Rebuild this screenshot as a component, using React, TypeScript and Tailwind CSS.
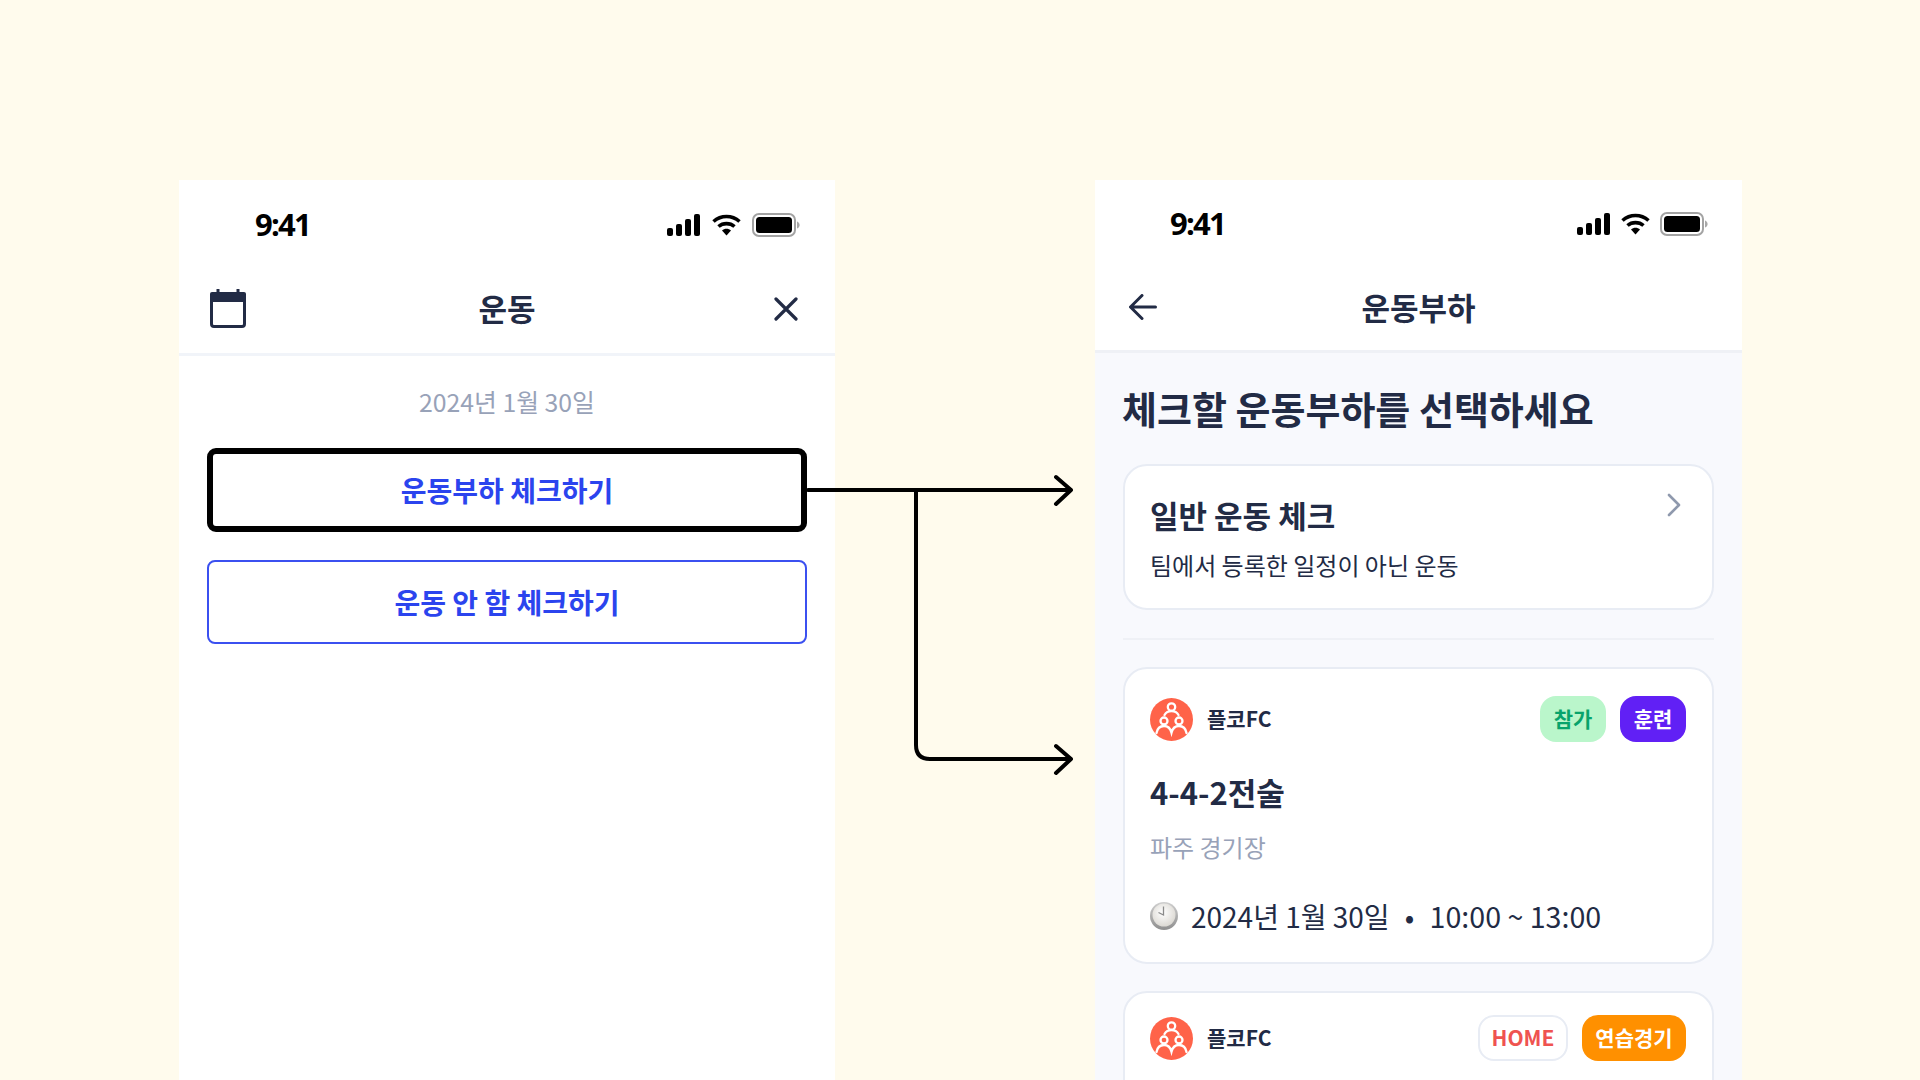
const font = "[font-family:'Noto_Sans_CJK_KR','Noto_Sans',sans-serif]";

function Signal() {
  return (
    <svg width="34" height="22" viewBox="0 0 34 22" fill="#000">
      <rect x="0" y="14" width="6" height="8" rx="2" />
      <rect x="9" y="10" width="6" height="12" rx="2" />
      <rect x="18" y="5" width="6" height="17" rx="2" />
      <rect x="27" y="0" width="6" height="22" rx="2" />
    </svg>
  );
}

function Wifi() {
  return (
    <svg width="29" height="22" viewBox="0 0 29 22" fill="none">
      <path d="M1.5 7.5C9 .8 20 .8 27.5 7.5" stroke="#000" strokeWidth="3.6" />
      <path d="M6.5 12.5C11 8.6 18 8.6 22.5 12.5" stroke="#000" strokeWidth="3.6" />
      <path d="M10 16.5C12.6 14 16.4 14 19 16.5L14.5 21.5Z" fill="#000" />
    </svg>
  );
}

function Battery() {
  return (
    <svg width="48" height="24" viewBox="0 0 48 24" fill="none">
      <rect x="1" y="1" width="42" height="22" rx="6" stroke="#a3a3a3" strokeWidth="2" />
      <rect x="4" y="4" width="36" height="16" rx="3.5" fill="#000" />
      <path d="M45 8.5c1.6.5 2.6 2 2.6 3.5s-1 3-2.6 3.5Z" fill="#a8a8a8" />
    </svg>
  );
}

function Status({ className, gap }: { className: string; gap: string }) {
  return (
    <div className={`flex shrink-0 items-center justify-between ${className}`}>
      <span className="-mt-[2px] font-['Open_Sans',sans-serif] text-[31px] leading-none font-bold tracking-[-1.8px] text-black">9:41</span>
      <div className={`flex items-center ${gap}`}>
        <Signal />
        <Wifi />
        <Battery />
      </div>
    </div>
  );
}

function Logo() {
  return (
    <svg width="43" height="43" viewBox="0 0 43 43" fill="none" className="shrink-0">
      <circle cx="21.5" cy="21.5" r="21.5" fill="#ff6349" />
      <g stroke="#fff" strokeWidth="2.3" strokeLinecap="round">
        <circle cx="21.5" cy="9" r="3.700" />
        <circle cx="14" cy="23" r="3.500" />
        <circle cx="29" cy="23" r="3.500" />
        <path d="M14.500 17c1.400-2.500 3.800-3.900 7-3.900s5.600 1.400 7 3.900" />
        <path d="M6.500 35c.8-4.400 3.500-7 7.500-7 3.800 0 6.400 2.400 7.500 6.600 1.100-4.200 3.700-6.600 7.500-6.600 4 0 6.700 2.600 7.500 7" />
      </g>
    </svg>
  );
}

function Clock() {
  return (
    <svg width="28" height="28" viewBox="0 0 28 28" className="shrink-0">
      <defs>
        <linearGradient id="rim" x1="0" y1="0" x2="0" y2="1">
          <stop offset="0" stopColor="#cfcfcf" />
          <stop offset="1" stopColor="#8f8f8f" />
        </linearGradient>
        <radialGradient id="face" cx="0.45" cy="0.4" r="0.65">
          <stop offset="0" stopColor="#ffffff" />
          <stop offset="1" stopColor="#d9d6d0" />
        </radialGradient>
      </defs>
      <circle cx="14" cy="14" r="14" fill="url(#rim)" />
      <circle cx="14" cy="13" r="11.500" fill="url(#face)" />
      <path d="M13.500 4.500V13L8.500 10.500" stroke="#8a8a8a" strokeWidth="1.300" fill="none" />
    </svg>
  );
}

function TeamRow({ children }: { children: React.ReactNode }) {
  return (
    <div className="flex items-center justify-between">
      <div className="flex items-center gap-[14px]">
        <Logo />
        <span className="text-[21px] font-bold text-[#222b45]">플코FC</span>
      </div>
      <div className="flex items-center gap-[14px]">{children}</div>
    </div>
  );
}

function Badge({ className, children }: { className: string; children: React.ReactNode }) {
  return (
    <span className={`flex h-[46px] items-center justify-center rounded-[16px] text-[21px] font-bold ${className}`}>
      {children}
    </span>
  );
}

export default function App() {
  return (
    <div className={`relative flex h-[1080px] w-[1920px] items-start gap-[260px] overflow-hidden bg-[#fffbed] pt-[180px] pl-[179px] ${font}`}>
      <div className="flex h-[900px] w-[656px] shrink-0 flex-col bg-white">
        <Status className="h-[90px] pr-[35px] pl-[76px]" gap="gap-[11px]" />
        <div className="flex h-[86px] shrink-0 items-center justify-between border-b-[3px] border-[#f1f4f9] pr-[37px] pb-[6px] pl-[31px]">
          <svg width="36" height="39" viewBox="0 0 36 39" fill="none">
            <path d="M8 0v6M28 0v6" stroke="#222b45" strokeWidth="3" />
            <rect x="1.500" y="5" width="33" height="32.500" rx="2.500" stroke="#222b45" strokeWidth="3" />
            <rect x="0" y="3" width="36" height="10" rx="2" fill="#222b45" />
          </svg>
          <span className="-mt-[2px] text-[31px] leading-none font-bold text-[#222b45]">운동</span>
          <div className="flex w-[30px] justify-end">
            <svg width="24" height="24" viewBox="0 0 24 24" fill="none" stroke="#222b45" strokeWidth="3.200" strokeLinecap="round">
              <path d="M2 2l20 20M22 2 2 22" />
            </svg>
          </div>
        </div>
        <div className="flex flex-col items-center px-[28px]">
          <p className="mt-[27px] text-[24.8px] leading-[36px] text-[#98a2b8]">2024년 1월 30일</p>
          <button className="mt-[29px] flex h-[84px] w-[600px] items-center justify-center rounded-[9px] border-[6px] border-black bg-white text-[28px] font-bold text-[#2b44ee]">
            운동부하 체크하기
          </button>
          <button className="mt-[28px] flex h-[84px] w-[600px] items-center justify-center rounded-[8px] border-2 border-[#3b50f0] bg-white text-[28px] font-bold text-[#2b44ee]">
            운동 안 함 체크하기
          </button>
        </div>
      </div>

      <div className="flex h-[900px] w-[647px] shrink-0 flex-col overflow-hidden bg-white">
        <Status className="h-[88px] pr-[34px] pl-[75px]" gap="gap-[10px]" />
        <div className="relative flex h-[85px] shrink-0 items-center justify-center border-b-[3px] border-[#eff1f6] pb-[4px]">
          <svg width="28" height="26" viewBox="0 0 28 26" fill="none" stroke="#222b45" strokeWidth="3" strokeLinecap="round" strokeLinejoin="round" className="absolute top-[26px] left-[34px]">
            <path d="M26.500 13H2M13 1.500 1.500 13 13 24.500" />
          </svg>
          <span className="-mt-[1px] text-[31px] leading-none font-bold text-[#222b45]">운동부하</span>
        </div>
        <div className="flex min-h-0 flex-1 flex-col bg-[#f8f9fd] px-[28px]">
          <h1 className="mt-[28px] -ml-[1px] shrink-0 text-[38px] leading-[54px] font-bold text-[#222b45]">체크할 운동부하를 선택하세요</h1>
          <div className="relative mt-[29px] h-[146px] shrink-0 rounded-[24px] border-2 border-[#e8ecf4] bg-white pt-[27px] pr-[26px] pl-[25px]">
            <p className="text-[31px] leading-[44px] font-bold text-[#222b45]">일반 운동 체크</p>
            <p className="mt-[10px] text-[24px] leading-[36px] text-[#222b45]">팀에서 등록한 일정이 아닌 운동</p>
            <svg width="14" height="24" viewBox="0 0 14 24" fill="none" stroke="#8f99ad" strokeWidth="2.600" strokeLinecap="round" strokeLinejoin="round" className="absolute top-[27px] right-[31px]">
              <path d="M2 2l10 10L2 22" />
            </svg>
          </div>
          <div className="mt-[28px] h-[2px] shrink-0 bg-[#eff1f6]" />
          <div className="mt-[27px] h-[297px] shrink-0 rounded-[24px] border-2 border-[#e8ecf4] bg-white pt-[27px] pr-[26px] pl-[25px]">
            <TeamRow>
              <Badge className="w-[66px] bg-[#baf6cb] text-[#08a36b]">참가</Badge>
              <Badge className="w-[66px] bg-[#6120f5] text-white">훈련</Badge>
            </TeamRow>
            <p className="mt-[27px] text-[31px] leading-[46px] font-bold text-[#222b45]">4-4-2전술</p>
            <p className="mt-[14px] text-[24px] leading-[36px] text-[#98a2b8]">파주 경기장</p>
            <div className="mt-[31px] flex items-center gap-[13px] text-[#222b45]">
              <Clock />
              <span className="text-[28px] leading-[40px]">2024년 1월 30일</span>
              <span className="-mx-[13px] w-[40px] text-center text-[28px] leading-[40px]">•</span>
              <span className="text-[28.6px] leading-[40px]">10:00 ~ 13:00</span>
            </div>
          </div>
          <div className="mt-[27px] h-[200px] shrink-0 rounded-[24px] border-2 border-[#e8ecf4] bg-white pt-[22px] pr-[26px] pl-[25px]">
            <TeamRow>
              <Badge className="w-[90px] border-2 border-[#e8ecf4] bg-white text-[#ef5350]">HOME</Badge>
              <Badge className="w-[104px] bg-[#ff9000] text-white">연습경기</Badge>
            </TeamRow>
          </div>
        </div>
      </div>

      <svg width="290" height="310" viewBox="0 0 290 310" fill="none" stroke="#000" strokeWidth="4" strokeLinecap="round" strokeLinejoin="round" className="absolute top-[470px] left-[800px]">
        <path d="M8 20H271M256 7l15 13-15 14" />
        <path d="M116 20V275q0 14 14 14H271M256 276l15 13-15 14" />
      </svg>
    </div>
  );
}
